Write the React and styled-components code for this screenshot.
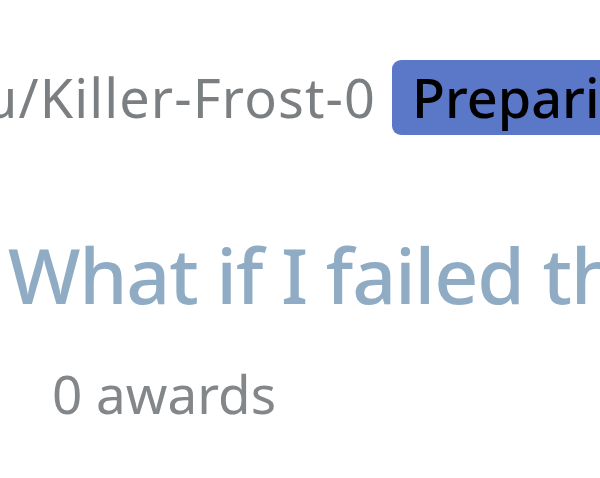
import React from 'react'
import styled, { createGlobalStyle } from 'styled-components';

const GlobalStyle = createGlobalStyle`
body {
  margin: 0;
  background: #ffffff;
  overflow: hidden;
}
`

const Post = styled.div`
box-sizing: border-box;
display: flex;
flex-direction: column;
padding-top: 60px;
width: 600px;
height: 478px;
overflow: hidden;
font-family: "Noto Sans", "Open Sans", sans-serif;
`
const Meta = styled.div`
display: flex;
align-items: center;
gap: 16px;
height: 75px;
white-space: nowrap;
`
const Author = styled.span`
font-size: 54px;
line-height: 75px;
letter-spacing: 1.1px;
color: #7c7f81;
margin-left: -16px;
`
const Flair = styled.span`
display: inline-flex;
align-items: center;
height: 75px;
padding: 0 20px;
border-radius: 9px;
background: #5a77c8;
color: #000000;
font-size: 54px;
font-weight: 500;
line-height: 75px;
`
const Title = styled.h3`
margin: 94px 0 0 8px;
font-size: 77px;
font-weight: 500;
line-height: 1.2;
letter-spacing: -1.2px;
color: #8facc4;
white-space: nowrap;
`
const Awards = styled.span`
margin: 41px 0 0 52px;
font-size: 53px;
line-height: 1.2;
color: #838789;
`

const App = () => {
    return (
        <>
            <GlobalStyle />
            <Post>
                <Meta>
                    <Author>u/Killer-Frost-0</Author>
                    <Flair>Preparing for the exam</Flair>
                </Meta>
                <Title>What if I failed the exam?</Title>
                <Awards>0 awards</Awards>
            </Post>
        </>
    )
}

export default App
